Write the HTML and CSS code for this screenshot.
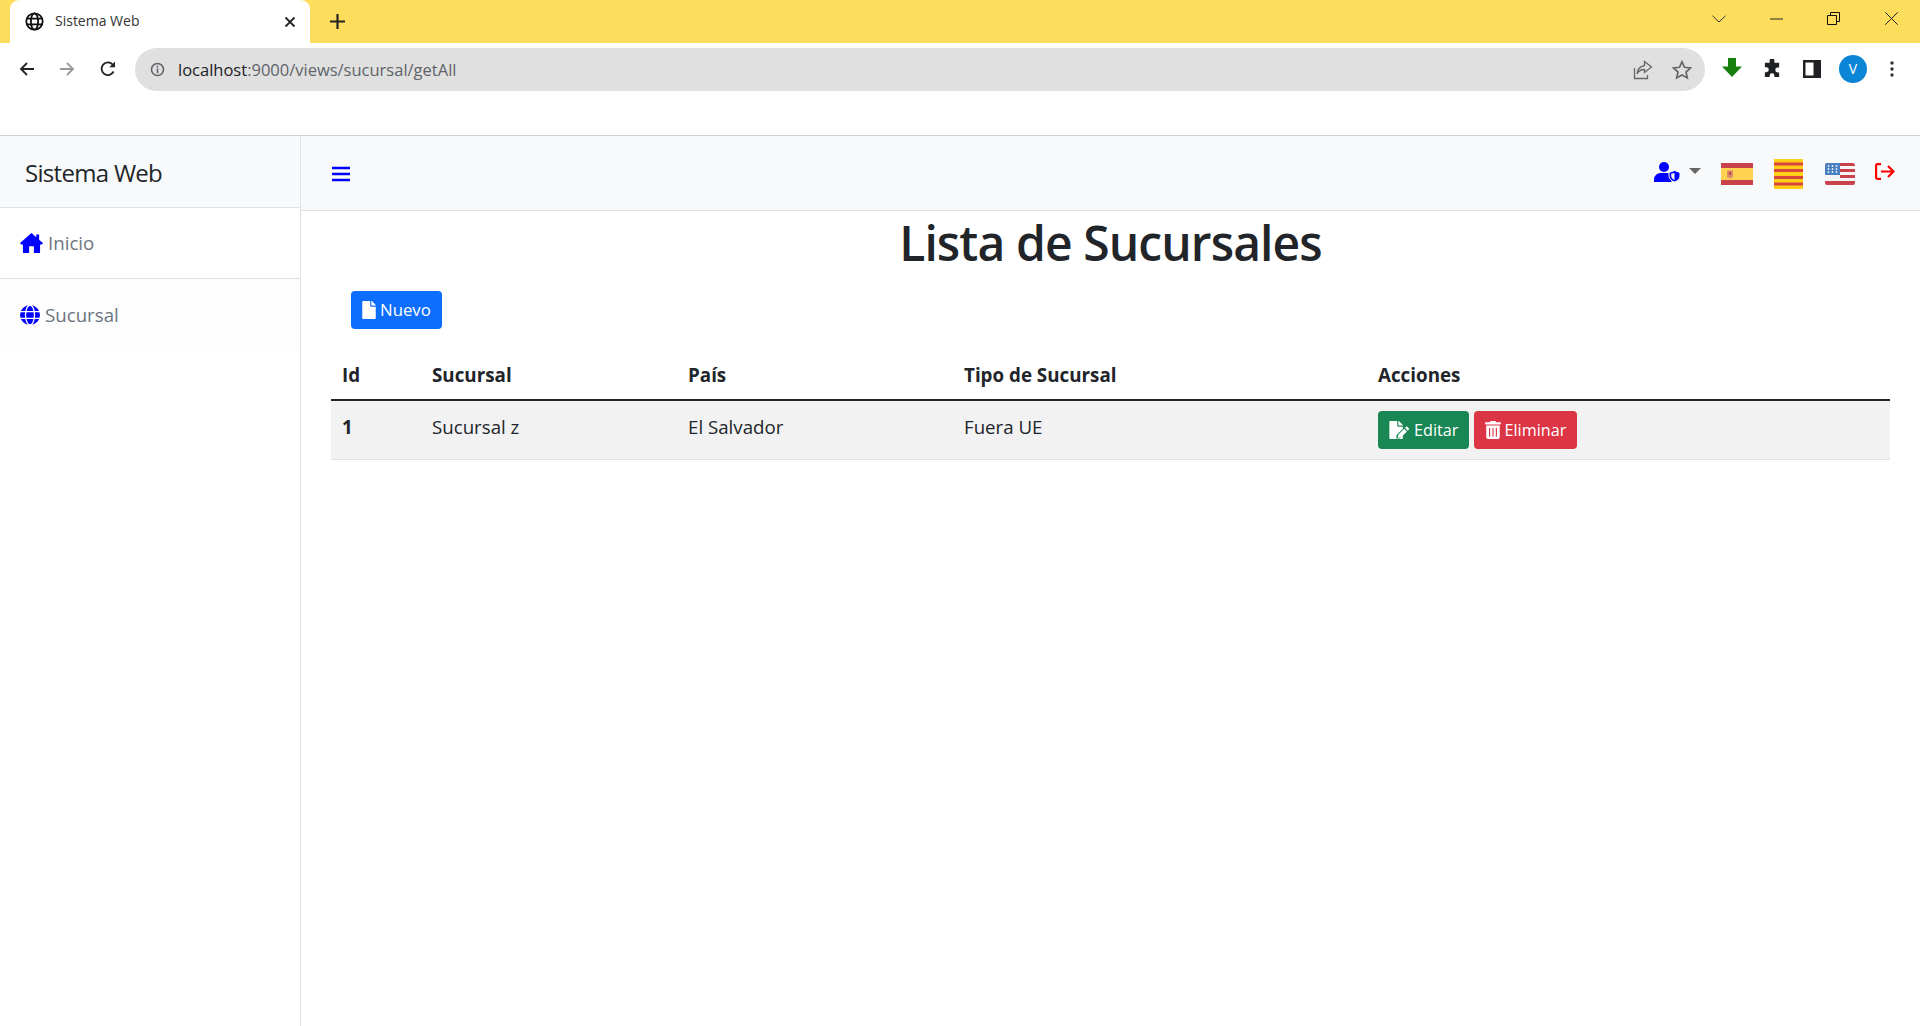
FILE: index.html
```html
<!DOCTYPE html>
<html lang="es">

<head>
    <meta charset="UTF-8">
    <meta name="viewport" content="width=device-width, initial-scale=1.0">
    <title>Sistema Web</title>
    <link rel="stylesheet" href="styles.css">
</head>

<body>
    <!-- browser chrome -->
    <div class="tabstrip">
        <div class="tab">
            <svg class="tab-favicon" viewBox="0 0 20 20" fill="none" stroke="#111" stroke-width="1.9">
                <circle cx="10" cy="10" r="8.6"/>
                <ellipse cx="10" cy="10" rx="3.8" ry="8.6"/>
                <path d="M1.5 7h17M1.5 13h17"/>
            </svg>
            <span class="tab-title">Sistema Web</span>
            <svg class="tab-close" viewBox="0 0 12 12" stroke="#222" stroke-width="1.8"><path d="M1.5 1.5l9 9M10.5 1.5l-9 9"/></svg>
        </div>
        <svg class="tab-new" viewBox="0 0 14 14" stroke="#222" stroke-width="2"><path d="M7 0v14M0 7h14"/></svg>
        <div class="window-controls">
            <svg class="win-chevron" viewBox="0 0 14 8" fill="none" stroke="#333"><path d="M.5 .8L7 7l6.5-6.2"/></svg>
            <svg class="win-min" viewBox="0 0 13 2" stroke="#222"><path d="M0 1h13"/></svg>
            <svg class="win-restore" viewBox="0 0 13 13" fill="none" stroke="#111"><path d="M.5 3.5h9v9h-9zM3.5 3.5v-3h9v9h-3"/></svg>
            <svg class="win-close" viewBox="0 0 13 13" stroke="#222"><path d="M.3 .3l12.4 12.4M12.7 .3L.3 12.7"/></svg>
        </div>
    </div>

    <div class="toolbar">
        <svg class="tool-icon tool-back" viewBox="0 0 16 16" fill="none" stroke="#222" stroke-width="1.8"><path d="M15 8H2M8 2L2 8l6 6"/></svg>
        <svg class="tool-icon tool-forward" viewBox="0 0 16 16" fill="none" stroke="#999" stroke-width="1.8"><path d="M1 8h13M8 2l6 6-6 6"/></svg>
        <svg class="tool-icon tool-reload" viewBox="0 0 16 16" fill="none" stroke="#222" stroke-width="1.8"><path d="M13.6 10.5A6.300 6.300 0 1 1 12.600 3.500L14.500 5.300"/><path d="M15 .5V6.200H9.300z" fill="#222" stroke="none"/></svg>
        <div class="omnibox">
            <svg class="omni-info" viewBox="0 0 16 16" fill="none" stroke="#5f6368" stroke-width="1.7">
                <circle cx="8" cy="8" r="6.4"/>
                <path d="M8 7v5M8 4v1.800"/>
            </svg>
            <span class="omni-url"><span class="omni-host">localhost</span>:9000/views/sucursal/getAll</span>
            <svg class="omni-share" viewBox="0 0 20 20" fill="none" stroke="#666" stroke-width="1.3">
                <path d="M1.500 8v10.500h13V15"/>
                <path d="M11.500 1.500l7 5.500-7 5.500V9.500c-3.500 0-6 1.500-7.500 4.500 .3-4.500 3-7.500 7.500-8.500z"/>
            </svg>
            <svg class="omni-star" viewBox="0 0 20 20" fill="none" stroke="#666" stroke-width="1.7"><path d="M10 1.800l2.500 5.500 6 .7-4.500 4 1.300 5.900L10 15l-5.300 2.900L6 12 1.500 8l6-.7z"/></svg>
        </div>
        <svg class="tool-icon tool-download" viewBox="0 0 20 20" fill="#16800f"><path d="M6 0h8v8.500h6L10 19 0 8.500h6z"/></svg>
        <svg class="tool-icon tool-puzzle" viewBox="0 0 20 20" fill="#202124"><path d="M7 1.500a2.500 2.500 0 0 1 5 0V4h5v5h-1.500a2.600 2.600 0 0 0 0 5.200H17V19h-5v-1.500a2.500 2.500 0 0 0-5 0V19H2v-5h1.500a2.600 2.600 0 0 0 0-5.200H2V4h5z"/></svg>
        <svg class="tool-icon tool-panel" viewBox="0 0 18 18"><path d="M0 0h18v18H0z" fill="#202124"/><path d="M2.500 2.500h8v13h-8z" fill="#fff"/></svg>
        <div class="avatar">V</div>
        <svg class="tool-kebab" viewBox="0 0 4 16" fill="#333"><circle cx="2" cy="2" r="1.7"/><circle cx="2" cy="8" r="1.7"/><circle cx="2" cy="14" r="1.7"/></svg>
    </div>

    <!-- app -->
    <div class="wrapper">
        <aside class="sidebar">
            <div class="sidebar-header">Sistema Web</div>
            <a class="side-link" href="#">
                <svg class="icon-home" viewBox="0 0 24 21" fill="#00f"><path d="M12 0L0 10.500 1 12.200h2V21h6.500v-7h5v7H21v-8.800h2l1-1.700-4-3.500V1.500h-3v3z"/></svg>
                Inicio
            </a>
            <a class="side-link side-link-last" href="#">
                <svg class="icon-globe" viewBox="0 0 20 20">
                    <circle cx="10" cy="10" r="10" fill="#00f"/>
                    <g fill="none" stroke="#fff" stroke-width="1.3">
                        <ellipse cx="10" cy="10" rx="4.500" ry="10"/>
                        <path d="M0 6.600h20M0 13.400h20"/>
                    </g>
                </svg>
                Sucursal
            </a>
        </aside>

        <div class="content">
            <nav class="topbar">
                <svg class="icon-bars" viewBox="0 0 18 16" stroke="#00f" stroke-width="2.4"><path d="M0 2h18M0 8h18M0 14h18"/></svg>
                <div class="topbar-right">
                    <svg class="icon-user" viewBox="0 0 26 20">
                        <circle cx="10" cy="5" r="5" fill="#00f"/>
                        <path d="M0 20v-2.500C0 13.500 3.500 11 7 11h6c1.500 0 2.800 .4 3.500 1v4c0 1.500 .5 3 1.500 4z" fill="#00f"/>
                        <path d="M20.500 8.500l5.500 2v3.500c0 2.800-2.300 4.900-5.500 6-3.200-1.100-5.500-3.200-5.500-6v-3.500z" fill="#00f" stroke="#f8f9fa" stroke-width="1"/>
                        <path d="M20.500 11v7c-1.900-.8-3.300-2.200-3.300-4v-2.200z" fill="#f8f9fa"/>
                    </svg>
                    <span class="caret"></span>
                    <svg class="flag flag-es" viewBox="0 0 32 22">
                        <path d="M0 0h32v22H0z" fill="#c8414b"/>
                        <path d="M0 5h32v12H0z" fill="#ffd250"/>
                        <path d="M6 7.500h6v6.500l-3 1.500-3-1.500z" fill="#d98a6a"/>
                        <path d="M8 9h2v3H8z" fill="#c8414b"/>
                    </svg>
                    <svg class="flag flag-cat" viewBox="0 0 29 30">
                        <path d="M0 0h29v30H0z" fill="#ffcf17"/>
                        <path d="M0 3.500h29v3H0zM0 10h29v3H0zM0 17h29v3H0zM0 23.500h29v3H0z" fill="#d8463c"/>
                    </svg>
                    <svg class="flag flag-us" viewBox="0 0 30 22">
                        <rect width="30" height="22" rx="2.500" fill="#f5f5f5"/>
                        <path d="M2.500 0h25A2.500 2.500 0 0 1 30 2.500V3H0v-.5A2.500 2.500 0 0 1 2.500 0zM15 6h15v3H15zM15 12h15v3H15zM0 18h30v1.500a2.500 2.500 0 0 1-2.500 2.500h-25A2.500 2.500 0 0 1 0 19.500z" fill="#c8414b"/>
                        <path d="M2.500 0H15v12H0V2.500A2.500 2.500 0 0 1 2.500 0z" fill="#4a7fc1"/>
                        <g fill="#e8eef7"><circle cx="3.500" cy="3" r=".9"/><circle cx="7.500" cy="3" r=".9"/><circle cx="11.500" cy="3" r=".9"/><circle cx="3.500" cy="6" r=".9"/><circle cx="7.500" cy="6" r=".9"/><circle cx="11.500" cy="6" r=".9"/><circle cx="3.500" cy="9" r=".9"/><circle cx="7.500" cy="9" r=".9"/><circle cx="11.500" cy="9" r=".9"/></g>
                    </svg>
                    <svg class="icon-signout" viewBox="0 0 20 17" fill="none" stroke="#f00" stroke-width="2.2">
                        <path d="M6 1.100H2.500a1.400 1.400 0 0 0-1.400 1.400v12a1.400 1.400 0 0 0 1.400 1.400H6"/>
                        <path d="M6 8.500h12.500M13 3l5.500 5.500L13 14"/>
                    </svg>
                </div>
            </nav>

            <main class="page">
                <h1 class="page-title">Lista de Sucursales</h1>
                <a class="btn btn-blue btn-new" href="#">
                    <svg class="btn-icon icon-file" viewBox="0 0 384 512" fill="#fff"><path d="M224 136V0H24C10.700 0 0 10.700 0 24v464c0 13.300 10.700 24 24 24h336c13.300 0 24-10.700 24-24V160H248c-13.200 0-24-10.800-24-24zm160-14.100v6.100H256V0h6.100c6.400 0 12.500 2.500 17 7l97.900 98c4.500 4.500 7 10.600 7 16.900z"/></svg>
                    Nuevo
                </a>

                <table class="data-table">
                    <thead>
                        <tr>
                            <th class="col-id">Id</th>
                            <th class="col-name">Sucursal</th>
                            <th class="col-country">País</th>
                            <th class="col-type">Tipo de Sucursal</th>
                            <th>Acciones</th>
                        </tr>
                    </thead>
                    <tbody>
                        <tr>
                            <td class="cell-id">1</td>
                            <td>Sucursal z</td>
                            <td>El Salvador</td>
                            <td>Fuera UE</td>
                            <td class="cell-actions">
                                <a class="btn btn-green" href="#">
                                    <svg class="btn-icon icon-edit" viewBox="0 0 576 512" fill="#fff">
                                        <path d="M224 136V0H24C10.700 0 0 10.700 0 24v464c0 13.300 10.700 24 24 24h336c13.300 0 24-10.700 24-24v-70L290 500H200l4-100 180-180v-60H248c-13.200 0-24-10.800-24-24zm160-14.100v6.100H256V0h6.100c6.400 0 12.500 2.500 17 7l97.900 98c4.500 4.500 7 10.600 7 16.900z"/>
                                        <path d="M420 220l80 80-170 170-90 14 12-92zM445 195l30-30a25 25 0 0 1 35 0l45 45a25 25 0 0 1 0 35l-30 30z"/>
                                    </svg>
                                    Editar
                                </a>
                                <a class="btn btn-red" href="#">
                                    <svg class="btn-icon icon-trash" viewBox="0 0 448 512" fill="#fff"><path d="M32 464a48 48 0 0 0 48 48h288a48 48 0 0 0 48-48V128H32zm272-256a16 16 0 0 1 32 0v224a16 16 0 0 1-32 0zm-96 0a16 16 0 0 1 32 0v224a16 16 0 0 1-32 0zm-96 0a16 16 0 0 1 32 0v224a16 16 0 0 1-32 0zM432 32H312l-9.400-18.700A24 24 0 0 0 281.100 0H166.800a23.720 23.720 0 0 0-21.400 13.300L136 32H16A16 16 0 0 0 0 48v32a16 16 0 0 0 16 16h416a16 16 0 0 0 16-16V48a16 16 0 0 0-16-16z"/></svg>
                                    Eliminar
                                </a>
                            </td>
                        </tr>
                    </tbody>
                </table>
            </main>
        </div>
    </div>
</body>

</html>
```

FILE: styles.css
```css
* {
    box-sizing: border-box;
}

body {
    font-family: "Open Sans", "Noto Sans", Arial, sans-serif;
    font-size: 16px;
    line-height: 24px;
    margin: 0;
    color: #212529;
    background-color: white;
    display: flex;
    flex-direction: column;
    min-height: 1026px;
    overflow: hidden;
}

svg {
    display: block;
    flex-shrink: 0;
}

/* browser chrome */
.tabstrip {
    height: 43px;
    background-color: #ffdd5c;
    display: flex;
    align-items: center;
    padding-left: 10px;
}

.tab {
    width: 300px;
    height: 43px;
    background-color: white;
    border-radius: 9px 9px 0 0;
    display: flex;
    align-items: center;
    padding: 0 14px 0 15px;
}

.tab-favicon {
    width: 19px;
    height: 19px;
}

.tab-title {
    margin-left: 11px;
    padding-bottom: 2px;
    flex-grow: 1;
    font-size: 14px;
    color: #333;
}

.tab-close {
    width: 12px;
    height: 12px;
}

.tab-new {
    width: 15px;
    height: 15px;
    margin-left: 20px;
}

.window-controls {
    margin-left: auto;
    padding-bottom: 6px;
    display: flex;
    align-items: center;
    padding-right: 22px;
}

.win-chevron {
    width: 14px;
    height: 8px;
}

.win-min {
    width: 13px;
    height: 2px;
    margin-left: 44px;
}

.win-restore {
    width: 13px;
    height: 13px;
    margin-left: 44px;
}

.win-close {
    width: 13px;
    height: 13px;
    margin-left: 45px;
}

.toolbar {
    height: 93px;
    padding-top: 5px;
    border-bottom: 1px solid #d0d3d6;
    display: flex;
    align-items: flex-start;
    padding-left: 19px;
}

.tool-icon {
    width: 16px;
    height: 16px;
    margin-top: 13px;
}

.tool-forward {
    margin-left: 24px;
}

.tool-reload {
    margin-left: 25px;
}

.omnibox {
    width: 1570px;
    height: 43px;
    margin-left: 19px;
    background-color: #e0e0e0;
    border-radius: 22px;
    display: flex;
    align-items: center;
    padding: 0 13px 0 15px;
}

.omni-info {
    width: 15px;
    height: 15px;
}

.omni-url {
    margin-left: 13px;
    flex-grow: 1;
    font-size: 16.5px;
    color: #5f6368;
}

.omni-host {
    color: #202124;
}

.omni-share {
    width: 20px;
    height: 20px;
}

.omni-star {
    width: 20px;
    height: 20px;
    margin-left: 19px;
}

.tool-download {
    width: 20px;
    height: 20px;
    margin: 10px 0 0 17px;
}

.tool-puzzle {
    width: 19px;
    height: 19px;
    margin: 11px 0 0 21px;
}

.tool-panel {
    width: 18px;
    height: 18px;
    margin: 12px 0 0 21px;
}

.avatar {
    width: 28px;
    height: 28px;
    margin: 7px 0 0 18px;
    border-radius: 50%;
    background-color: #0b86d6;
    color: white;
    font-size: 14px;
    line-height: 28px;
    text-align: center;
}

.tool-kebab {
    width: 4px;
    height: 16px;
    margin: 13px 0 0 23px;
}

/* app */
.wrapper {
    display: flex;
    flex-grow: 1;
}

.sidebar {
    width: 301px;
    flex-shrink: 0;
    border-right: 1px solid #dee2e6;
}

.sidebar-header {
    height: 72px;
    background-color: #f8f9fa;
    border-bottom: 1px solid #dee2e6;
    padding-left: 25px;
    font-size: 24px;
    line-height: 73px;
    letter-spacing: -0.7px;
}

.side-link {
    height: 71px;
    display: flex;
    align-items: center;
    padding-left: 20px;
    gap: 5px;
    color: #6c757d;
    font-size: 18.7px;
    text-decoration: none;
    border-bottom: 1px solid #dee2e6;
}

.side-link-last {
    background-color: #fdfdfd;
    border-bottom: none;
}

.icon-home {
    width: 23px;
    height: 20px;
}

.icon-globe {
    width: 20px;
    height: 20px;
}

.content {
    flex-grow: 1;
    display: flex;
    flex-direction: column;
}

.topbar {
    height: 75px;
    background-color: #f8f9fa;
    border-bottom: 1px solid #dee2e6;
    display: flex;
    align-items: center;
    padding: 1px 25px 0 31px;
}

.icon-bars {
    width: 18px;
    height: 16px;
}

.topbar-right {
    margin-left: auto;
    display: flex;
    align-items: center;
}

.icon-user {
    width: 26px;
    height: 20px;
    margin-bottom: 4px;
}

.caret {
    margin-left: 9px;
    margin-bottom: 6px;
    border-top: 6px solid #666;
    border-left: 6px solid transparent;
    border-right: 6px solid transparent;
}

.flag-es {
    width: 32px;
    height: 22px;
    margin-left: 20px;
}

.flag-cat {
    width: 29px;
    height: 30px;
    margin-left: 21px;
}

.flag-us {
    width: 30px;
    height: 22px;
    margin-left: 22px;
}

.icon-signout {
    width: 20px;
    height: 17px;
    margin-left: 20px;
    margin-bottom: 5px;
}

.page {
    padding: 3px 30px 0;
}

.page-title {
    margin: 0 0 19px;
    font-size: 48px;
    line-height: 58px;
    font-weight: 600;
    text-align: center;
    letter-spacing: -0.9px;
}

.btn {
    display: inline-flex;
    align-items: center;
    height: 38px;
    padding: 0 11px;
    gap: 4px;
    color: white;
    font-size: 16.8px;
    text-decoration: none;
    border-radius: 4px;
}

.btn-blue {
    background-color: #0d6efd;
}

.btn-green {
    background-color: #198754;
}

.btn-red {
    background-color: #dc3545;
}

.btn-new {
    margin-left: 20px;
}

.btn-icon {
    height: 18px;
}

.icon-file {
    width: 14px;
}

.icon-edit {
    width: 21px;
}

.icon-trash {
    width: 16px;
}

.data-table {
    width: 100%;
    margin-top: 30px;
    border-collapse: collapse;
    table-layout: fixed;
}

.data-table th {
    height: 40px;
    padding: 4px 11px 12px;
    text-align: left;
    font-size: 18.8px;
    font-weight: 700;
    border-bottom: 2px solid #212529;
}

.data-table td {
    padding: 14px 11px 20px;
    vertical-align: top;
    background-color: #f2f2f2;
    border-bottom: 1px solid #dee2e6;
    font-size: 18.7px;
}

.col-id {
    width: 90px;
}

.col-name {
    width: 256px;
}

.col-country {
    width: 276px;
}

.col-type {
    width: 414px;
}

.data-table .cell-id {
    font-weight: 700;
}

.data-table .cell-actions {
    padding: 10px 11px;
    font-size: 16px;
}

.cell-actions .btn {
    font-size: 16.2px;
}
```
